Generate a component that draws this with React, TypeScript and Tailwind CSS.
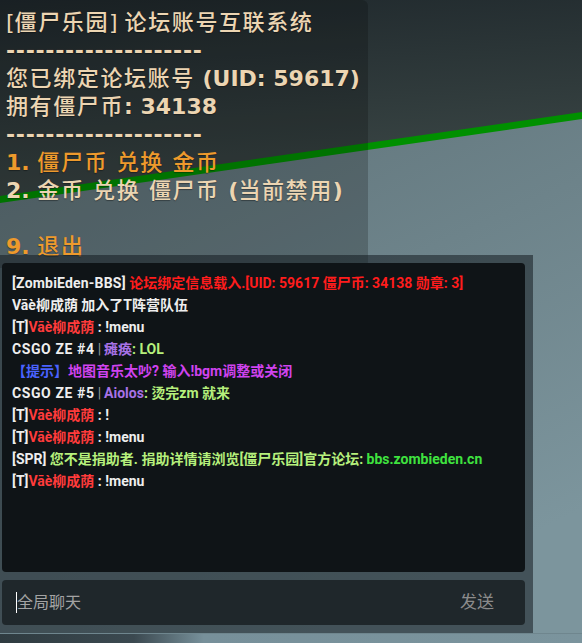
import type { ReactNode } from "react";

const MENU_FONT = "font-['DejaVu_Sans','Noto_Sans_CJK_SC',sans-serif]";
const CHAT_FONT = "font-['Roboto','Noto_Sans_CJK_SC',sans-serif]";

// CJK runs in the menu are lighter than the latin bits, with a little extra spacing
function Cn({ children }: { children: ReactNode }) {
  return <span className="font-medium tracking-[1.6px]">{children}</span>;
}

function Scene() {
  return (
    <svg className="absolute inset-0" width="582" height="643" viewBox="0 0 582 643">
      <defs>
        <linearGradient id="upper" x1="0" y1="0" x2="0.2" y2="1">
          <stop offset="0" stopColor="#20292d" />
          <stop offset="1" stopColor="#3a4645" />
        </linearGradient>
        <linearGradient id="lower" x1="0" y1="0" x2="0.5" y2="1">
          <stop offset="0" stopColor="#5e7177" />
          <stop offset="1" stopColor="#7c959d" />
        </linearGradient>
        <linearGradient id="strip" x1="0" y1="0" x2="1" y2="0">
          <stop offset="0" stopColor="#2f3b40" />
          <stop offset="0.23" stopColor="#3b4950" />
          <stop offset="0.35" stopColor="#77909a" />
          <stop offset="1" stopColor="#7b949d" />
        </linearGradient>
      </defs>
      <polygon points="0,0 582,0 582,113 0,197" fill="url(#upper)" />
      <polygon points="0,197 582,113 582,643 0,643" fill="url(#lower)" />
      <polygon points="0,196 582,112 582,119 0,203" fill="#009000" />
      <rect x="0" y="633" width="582" height="1" fill="#6f868e" />
      <rect x="0" y="634" width="582" height="9" fill="url(#strip)" />
    </svg>
  );
}

function Menu() {
  return (
    <div
      className={`absolute left-0 top-0 w-[368px] h-[268px] rounded-r-md bg-black/20 pl-[6px] pt-[9px] text-[22px] leading-[28px] text-[#ecd5b2] whitespace-pre ${MENU_FONT} [text-shadow:0_1px_1px_rgba(0,0,0,0.35)]`}
    >
      <div>[<Cn>僵尸乐园</Cn>] <Cn>论坛账号互联系统</Cn></div>
      <div className="font-bold tracking-[0.7px]">--------------------</div>
      <div className="font-bold"><Cn>您已绑定论坛账号</Cn> (UID: 59617)</div>
      <div className="font-bold"><Cn>拥有僵尸币</Cn>: 34138</div>
      <div className="font-bold tracking-[0.7px]">--------------------</div>
      <div className="font-bold text-[#ee9a2c]">1. <Cn>僵尸币 兑换 金币</Cn></div>
      <div className="font-bold">2. <Cn>金币 兑换 僵尸币 </Cn>(<Cn>当前禁用</Cn>)</div>
      <div>&nbsp;</div>
      <div className="font-bold text-[#ee9a2c]">9. <Cn>退出</Cn></div>
    </div>
  );
}

function Line({ children }: { children: ReactNode }) {
  return <div className="h-[22px] leading-[22px] whitespace-pre">{children}</div>;
}

function Bar() {
  return <span className="mx-[3px] font-normal text-[#8f979b]">|</span>;
}

const RED_NAME = "text-[#ff3b3b]";
const LIME = "text-[#b6f07c]";
const PURPLE = "text-[#a772e6]";

function Chat() {
  return (
    <div className="absolute left-0 top-[255px] w-[533px] h-[378px] bg-[rgba(20,28,32,0.55)] pl-[2px] pr-[8px] pt-[8px] pb-[8px] flex flex-col gap-[8px]">
      <div className={`h-[309px] rounded-sm bg-[#0f1417] pl-[10px] pt-[9px] text-[14px] font-bold text-[#eeeeee] ${CHAT_FONT}`}>
        <Line>
          <span className="tracking-[0.2px]">[ZombiEden-BBS]</span> <span className="text-[#ff1c1c]">论坛绑定信息载入.[UID: 59617 僵尸币: 34138 勋章: 3]</span>
        </Line>
        <Line>Vāè柳成荫 加入了T阵营队伍</Line>
        <Line>
          [T]<span className={RED_NAME}>Vāè柳成荫</span> : !menu
        </Line>
        <Line>
          <span className="tracking-[0.6px]">CSGO ZE #4</span><Bar /><span className={PURPLE}>瘫痪</span><span className={LIME}>: LOL</span>
        </Line>
        <Line>
          <span className="text-[#4a62ff]">【提示】</span><span className="text-[#d043ef]">地图音乐太吵? 输入!bgm调整或关闭</span>
        </Line>
        <Line>
          <span className="tracking-[0.6px]">CSGO ZE #5</span><Bar /><span className={PURPLE}>Aiolos</span><span className={LIME}>: 烫完zm 就来</span>
        </Line>
        <Line>
          [T]<span className={RED_NAME}>Vāè柳成荫</span> : !
        </Line>
        <Line>
          [T]<span className={RED_NAME}>Vāè柳成荫</span> : !menu
        </Line>
        <Line>
          [SPR] <span className={LIME}>您不是捐助者. 捐助详情请浏览[僵尸乐园]官方论坛:</span>{" "}
          <span className="text-[#3fe23f]">bbs.zombieden.cn</span>
        </Line>
        <Line>
          [T]<span className={RED_NAME}>Vāè柳成荫</span> : !menu
        </Line>
      </div>
      <div className={`h-[45px] rounded-sm bg-[#1f272b] flex items-center pl-[14px] pr-[31px] ${CHAT_FONT}`}>
        <span className="w-px h-[21px] bg-white" />
        <span className="flex-1 text-[16px] text-[#a3a3a3]">全局聊天</span>
        <span className="text-[17px] text-[#8b8b8b]">发送</span>
      </div>
    </div>
  );
}

export default function App() {
  return (
    <div className="relative w-[582px] h-[643px] overflow-hidden bg-[#2a3438]">
      <Scene />
      <Menu />
      <Chat />
    </div>
  );
}
